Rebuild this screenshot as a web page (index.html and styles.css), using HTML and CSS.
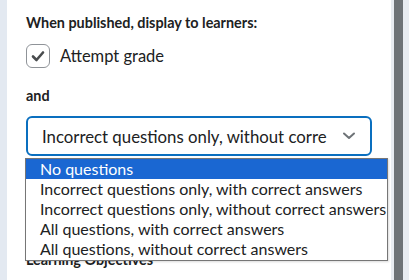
FILE: index.html
```html
<!DOCTYPE html>
<html>
<head>
<meta charset="utf-8">
<link rel="stylesheet" href="styles.css">
</head>
<body>
<div class="page">
  <div class="rail"></div>
  <main class="panel">
    <h2 class="label">When published, display to learners:</h2>
    <label class="check-row">
      <span class="checkbox">
        <svg width="16" height="16" viewBox="0 0 16 16"><path d="M3 8.5 L6.5 12 L13 4.5" fill="none" stroke="#494c4e" stroke-width="2.6" stroke-linecap="round" stroke-linejoin="round"/></svg>
      </span>
      <span class="check-text">Attempt grade</span>
    </label>
    <div class="label and">and</div>
    <div class="select-wrap">
      <div class="select">
        <span class="select-value">Incorrect questions only, without corre</span>
        <svg class="chev" width="14" height="8" viewBox="0 0 14 8"><path d="M2 1.5 L7 6 L12 1.5" fill="none" stroke="#6e7377" stroke-width="2" stroke-linecap="round" stroke-linejoin="round"/></svg>
      </div>
      <ul class="listbox">
        <li class="opt selected">No questions</li>
        <li class="opt">Incorrect questions only, with correct answers</li>
        <li class="opt">Incorrect questions only, without correct answers</li>
        <li class="opt">All questions, with correct answers</li>
        <li class="opt">All questions, without correct answers</li>
      </ul>
    </div>
    <h2 class="label next">Learning Objectives</h2>
  </main>
  <div class="gutter"></div>
  <div class="scroll"></div>
  <div class="edge"></div>
</div>
</body>
</html>
```
FILE: styles.css
```css
html, body {
  margin: 0;
  padding: 0;
  height: 280px;
  overflow: hidden;
  font-family: Lato, "Liberation Sans", sans-serif;
  color: #202122;
}
.page {
  display: flex;
  height: 280px;
}
.rail {
  width: 7px;
  background: #e3e9f1;
}
.panel {
  flex: 1;
  background: #ffffff;
  padding: 13px 0 0 19px;
  box-sizing: border-box;
}
.gutter {
  width: 3px;
  background: #e8ecf1;
}
.scroll {
  width: 9px;
  background: #6e7377;
}
.edge {
  width: 6px;
  background: #e8ecf1;
}
.label {
  margin: 0;
  font-size: 14.4px;
  font-weight: 700;
  line-height: 20px;
}
.check-row {
  display: flex;
  align-items: center;
  gap: 10px;
  margin-top: 11px;
  height: 24px;
}
.checkbox {
  width: 22px;
  height: 22px;
  border: 1px solid #8f9398;
  border-radius: 6px;
  display: flex;
  align-items: center;
  justify-content: center;
}
.check-text {
  font-size: 16.5px;
  line-height: 20px;
}
.and {
  margin-top: 18px;
}
.select-wrap {
  position: relative;
  margin-top: 10px;
  width: 346px;
}
.select {
  height: 40px;
  box-sizing: border-box;
  border: 2px solid #0a6fbf;
  border-radius: 6px;
  display: flex;
  align-items: center;
  padding: 0 14px;
  justify-content: space-between;
  font-size: 16.8px;
}
.select-value {
  white-space: nowrap;
  overflow: hidden;
}
.chev {
  margin-right: 0;
}
.listbox {
  position: absolute;
  top: 42px;
  left: -1px;
  width: 363px;
  margin: 0;
  padding: 0 0 1px 0;
  list-style: none;
  background: #fff;
  border: 1px solid #767676;
  box-sizing: border-box;
  box-shadow: 1px 1px 2px rgba(0,0,0,0.15);
  z-index: 2;
}
.opt {
  height: 20px;
  line-height: 20px;
  font-size: 16px;
  padding-left: 14px;
  white-space: nowrap;
  color: #202122;
}
.opt.selected {
  background: #1a67d2;
  color: #ffffff;
}
.next {
  margin-top: 94px;
}
```
